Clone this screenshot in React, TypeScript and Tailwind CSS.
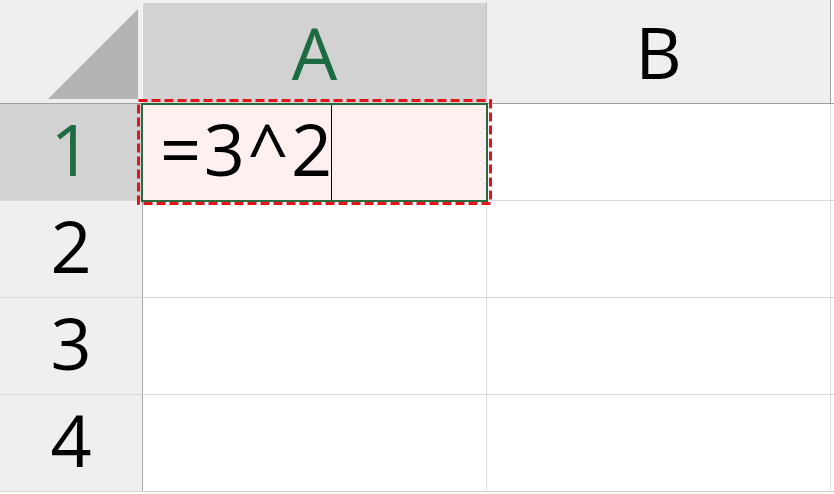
import React from 'react';

const rows = [2, 3, 4];

export default function App() {
  return (
    <div className="relative w-[834px] h-[494px] bg-white overflow-hidden font-['Open_Sans','Noto_Sans',sans-serif] text-black">
      {/* column headers */}
      <div className="flex h-[104px] border-b border-[#9f9f9f]">
        <div className="w-[143px] h-full bg-[#efefef] border-r border-[#f7f7f7] relative">
          <svg className="absolute left-0 top-0" width="142" height="103" viewBox="0 0 142 103">
            <polygon points="48,99 138,99 138,9" fill="#b4b4b4" />
          </svg>
        </div>
        <div className="w-[344px] h-full border-t-[3px] border-t-[#f1f1f1] bg-[#d2d2d2] border-r border-r-[#c4c4c4] flex items-center justify-center text-[72px] leading-none text-[#1d6b42] pb-[2px]">
          A
        </div>
        <div className="w-[344px] h-full bg-[#efefef] border-r border-[#9f9f9f] flex items-center justify-center text-[72px] leading-none pb-[2px]">
          B
        </div>
        <div className="flex-1 bg-white" />
      </div>

      {/* row 1 (selected) */}
      <div className="flex h-[97px] border-b border-[#dadada]">
        <div className="w-[143px] h-full bg-[#d2d2d2] border-r border-[#a8a8a8] flex items-center justify-center text-[72px] leading-none text-[#1d6b42] pb-[8px]">
          1
        </div>
        <div className="w-[344px] h-full bg-[#fdf0ef] border-r border-[#dadada] flex items-center pl-[17px] text-[72px] leading-none pb-[8px]">
          <span className="tracking-[2.5px]">=3^2</span>
          <span className="-ml-[4px] self-stretch w-[1.5px] bg-black -mb-[8px]" />
        </div>
        <div className="w-[344px] h-full border-r border-[#dadada]" />
        <div className="flex-1" />
      </div>

      {rows.map((n) => (
        <div key={n} className="flex h-[97px] border-b border-[#d6d6d6]">
          <div className="w-[143px] h-full bg-[#efefef] border-r border-[#a8a8a8] flex items-center justify-center text-[72px] leading-none pb-[8px]">
            {n}
          </div>
          <div className="w-[344px] h-full border-r border-[#dadada]" />
          <div className="w-[344px] h-full border-r border-[#dadada]" />
          <div className="flex-1" />
        </div>
      ))}

      {/* selection outline */}
      <div className="absolute left-[141px] top-[103px] w-[347px] h-[99px] border-2 border-[#2a6a3e] pointer-events-none" />
      {/* red dashed annotation */}
      <svg className="absolute left-[137px] top-[99px] pointer-events-none" width="355" height="106" viewBox="0 0 355 106">
        <rect x="1.5" y="1.5" width="352" height="103" fill="none" stroke="#e3141b" strokeWidth="3" strokeDasharray="9 4" />
      </svg>
    </div>
  );
}
